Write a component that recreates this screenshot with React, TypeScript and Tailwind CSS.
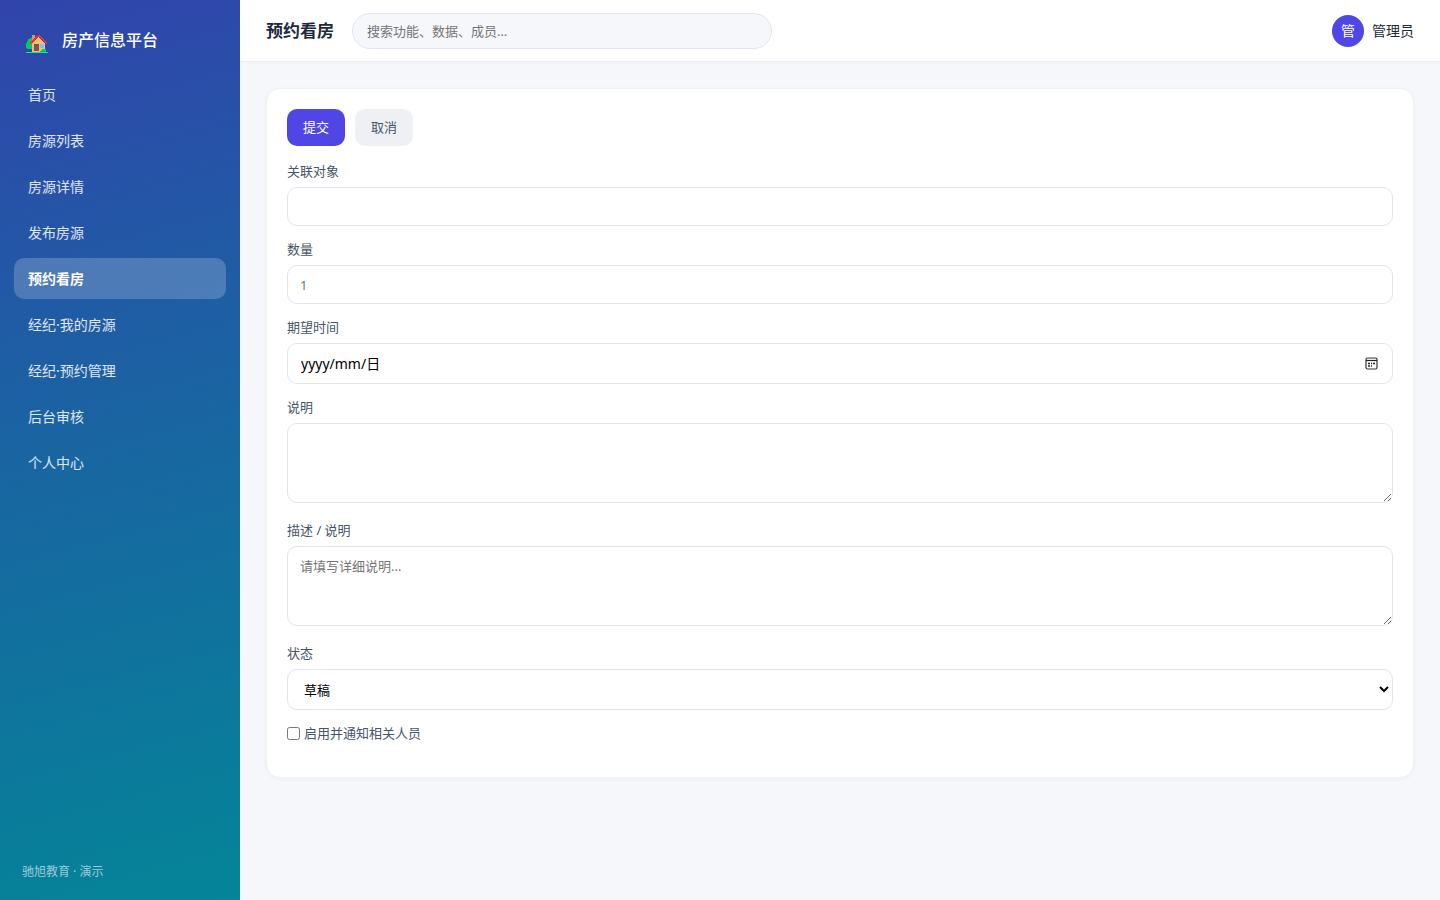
import type { ReactNode } from "react";

const navItems = [
  "首页",
  "房源列表",
  "房源详情",
  "发布房源",
  "预约看房",
  "经纪·我的房源",
  "经纪·预约管理",
  "后台审核",
  "个人中心",
];
const current = "预约看房";

const control =
  "block w-full rounded-[10px] border border-[#e2e4ed] bg-white px-3 text-[13px] text-black placeholder:text-[#757575]";

function HouseIcon() {
  return (
    <svg viewBox="0 0 22 18" className="h-[18px] w-[22px]" shapeRendering="crispEdges" aria-hidden="true">
      <path d="M4 3h2v11H1v-1H0V8h1V6h1V4h2z" fill="#00c965" />
      <path d="M6 0h3v6H6z" fill="#d99a62" />
      <path d="M6 8 12.500 2 19 8v9H6z" fill="#f5be7b" />
      <path
        d="M12 0h2v1h1v1h1v1h1v1h1v1h1v1h1v1h1v2h-1V8h-1V7h-1V6h-1V5h-1V4h-1V3h-1V2h-2v1h-1v1h-1v1H9v1H8v1H7v1H5v1H4V7h1V6h1V5h1V4h1V3h1V2h1V1h2z"
        fill="#fb2c36"
      />
      <path d="M8 9h5v7H8z" fill="#8a5140" />
      <path d="M14 9h4v4h-4z" fill="#82bdfa" />
      <path d="M14 17v-1h1v-1h1v-1h4v3z" fill="#00c965" />
      <path d="M0 17h22v1H0z" fill="#00f08a" />
    </svg>
  );
}

function CalendarIcon() {
  return (
    <svg viewBox="0 0 13 13" className="h-[13px] w-[13px]" fill="none" aria-hidden="true">
      <rect x="1" y="1" width="11" height="11" rx="1.500" stroke="#333" strokeWidth="1.200" />
      <path d="M1 3.500h11" stroke="#222" strokeWidth="1.200" />
      <path d="M3 6.500h2m1 0h1m1 0h2M3 9h2m1 0h1" stroke="#222" strokeWidth="1.400" />
    </svg>
  );
}

function Field({ id, label, children }: { id: string; label: string; children: ReactNode }) {
  return (
    <div className="flex flex-col gap-1.5">
      <label htmlFor={id} className="text-[13px] leading-[19px] text-[#475569]">
        {label}
      </label>
      {children}
    </div>
  );
}

export default function App() {
  return (
    <div className="flex min-h-screen bg-[#f5f7fb] font-['Noto_Sans','Noto_Sans_CJK_SC',sans-serif] text-sm text-[#1e293b]">
      <aside className="flex w-60 shrink-0 flex-col bg-[linear-gradient(165deg,#3144ac,#1c61a3_42%,#048598)] px-3.5 pt-[22px] pb-[18px] text-white">
        <div className="flex items-center gap-3.5 px-3">
          <span className="pt-2">
            <HouseIcon />
          </span>
          <span className="text-base leading-9 font-medium">房产信息平台</span>
        </div>
        <nav className="mt-4 flex flex-col gap-[5px]">
          {navItems.map((item) => (
            <a
              key={item}
              href="#"
              aria-current={item === current ? "page" : undefined}
              className={
                item === current
                  ? "rounded-[10px] bg-white/20 px-3.5 py-2.5 leading-[21px] font-bold text-white"
                  : "rounded-[10px] px-3.5 py-2.5 leading-[21px] text-white/85"
              }
            >
              {item}
            </a>
          ))}
        </nav>
        <p className="mt-auto px-2 text-xs leading-5 text-white/60">驰旭教育 · 演示</p>
      </aside>

      <div className="flex min-w-0 flex-1 flex-col">
        <header className="flex h-[62px] items-center gap-[18px] border-b border-[#eceef3] bg-white px-[26px]">
          <h1 className="text-[17px] leading-6 font-bold">预约看房</h1>
          <input
            type="search"
            aria-label="搜索"
            placeholder="搜索功能、数据、成员…"
            className="h-9 w-[420px] min-w-0 rounded-full border border-[#e2e4ed] bg-[#f5f7fb] px-3.5 text-[13px] placeholder:text-[#757575]"
          />
          <div className="ml-auto flex items-center gap-2">
            <span className="flex size-8 items-center justify-center rounded-full bg-[#4f46e5] text-white">管</span>
            <span>管理员</span>
          </div>
        </header>

        <main className="p-[26px]">
          <form className="rounded-[14px] border border-[#f0f1f6] bg-white p-5 shadow-[0_1px_4px_rgba(30,41,59,0.04)]">
            <div className="mb-4 flex gap-2.5">
              <button type="submit" className="h-[37px] rounded-[10px] bg-[#4f46e5] px-4 text-[13px] text-white">
                提交
              </button>
              <button type="button" className="h-[37px] rounded-[10px] bg-[#eef0f4] px-4 text-[13px] text-[#475569]">
                取消
              </button>
            </div>

            <div className="flex flex-col gap-3.5">
              <Field id="target" label="关联对象">
                <input id="target" type="text" className={`${control} h-[39px]`} />
              </Field>
              <Field id="amount" label="数量">
                <input id="amount" type="number" placeholder="1" className={`${control} h-[39px]`} />
              </Field>
              <Field id="date" label="期望时间">
                <div className="flex h-[41px] items-center rounded-[10px] border border-[#e2e4ed] bg-white px-3.5 pl-[13px]">
                  <input
                    id="date"
                    type="text"
                    placeholder="yyyy/mm/日"
                    className="min-w-0 flex-1 text-sm placeholder:text-black"
                  />
                  <button type="button" aria-label="选择日期">
                    <CalendarIcon />
                  </button>
                </div>
              </Field>
              <Field id="note" label="说明">
                <textarea id="note" className={`${control} h-20 py-2.5`} />
              </Field>
              <div className="mt-1 mb-1">
                <Field id="detail" label="描述 / 说明">
                  <textarea id="detail" placeholder="请填写详细说明..." className={`${control} h-20 py-2.5`} />
                </Field>
              </div>
              <Field id="status" label="状态">
                <select id="status" className={`${control} h-[41px]`}>
                  <option>草稿</option>
                </select>
              </Field>
              <label className="mb-3.5 flex items-center gap-1 text-[13px] leading-[19px] text-[#475569]">
                <input type="checkbox" className="size-[13px]" />
                启用并通知相关人员
              </label>
            </div>
          </form>
        </main>
      </div>
    </div>
  );
}
